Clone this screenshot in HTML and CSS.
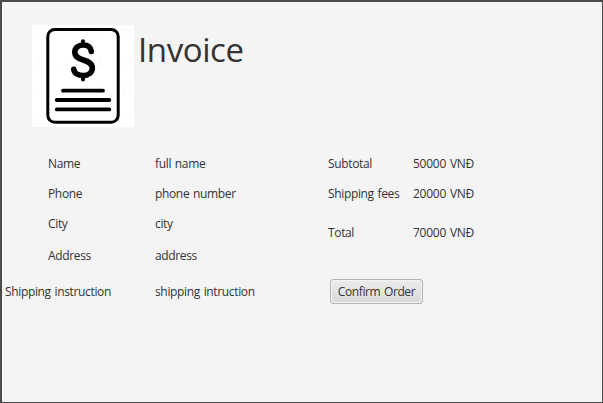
FILE: index.html
```html
<!DOCTYPE html>
<html lang="en">
<head>
<meta charset="utf-8">
<title>Invoice</title>
<link rel="stylesheet" href="styles.css">
</head>
<body>
<main class="window">
  <header class="header">
    <svg class="logo" width="102" height="102" viewBox="0 0 102 102" fill="none" stroke="#000" stroke-linecap="round" stroke-linejoin="round">
      <g stroke="#f7f7f7" stroke-width="1">
        <path d="M3 12l8-8M31 12l8-8M62 12l8-8M31 42l8-8M62 70l8-8M90 40l8-8M3 70l8-8M90 97l8-8"/>
        <circle cx="37" cy="8" r="3.5"/><circle cx="95" cy="8" r="3.5"/><circle cx="8" cy="37" r="3.5"/><circle cx="66" cy="37" r="3.5"/><circle cx="95" cy="66" r="3.5"/><circle cx="8" cy="95" r="3.5"/>
      </g>
      <rect x="15.8" y="4.5" width="70.4" height="92.8" rx="7" stroke-width="3"/>
      <path stroke-width="5.6" d="M59.300 26.500C59 22.500 56 20 51.300 20C46.500 20 42.800 22.800 42.800 27.300C42.800 37 60.300 33 60.300 43C60.300 47.500 56.500 50.500 51.300 50.500C46 50.500 42.300 48.200 41.800 44.300"/>
      <path stroke-width="4" d="M51 16.200V19M51 51.500V54.500"/>
      <path stroke-width="3.800" d="M31 65.700H71M24.700 75H77.300M24.700 84.400H77.300"/>
    </svg>
    <h1 class="title">Invoice</h1>
  </header>
  <div class="content">
    <dl class="customer">
      <dt>Name</dt><dd>full name</dd>
      <dt>Phone</dt><dd>phone number</dd>
      <dt>City</dt><dd>city</dd>
      <dt>Address</dt><dd>address</dd>
      <dt class="wide">Shipping instruction</dt><dd>shipping intruction</dd>
    </dl>
    <section class="summary">
      <dl class="totals">
        <dt>Subtotal</dt><dd>50000 VNĐ</dd>
        <dt>Shipping fees</dt><dd>20000 VNĐ</dd>
        <dt>Total</dt><dd>70000 VNĐ</dd>
      </dl>
      <button class="confirm" type="button">Confirm Order</button>
    </section>
  </div>
</main>
</body>
</html>
```
FILE: styles.css
```css
* { box-sizing: border-box; }
body {
  margin: 0;
  font: 12px/18px "Open Sans", "Noto Sans", sans-serif;
  letter-spacing: -0.35px;
  word-spacing: 1px;
  color: #333;
}
.window {
  width: 603px;
  height: 403px;
  overflow: hidden;
  background: #f4f4f4;
  border: solid #4b4b4b;
  border-width: 2px 1px 1px 2px;
}
.header {
  display: flex;
  gap: 4px;
  padding: 23px 0 0 30px;
}
.logo { background: #fff; }
.title {
  margin: 0;
  font-size: 33px;
  line-height: 50px;
  font-weight: 400;
  letter-spacing: -0.4px;
}
.content {
  display: flex;
  align-items: flex-start;
  padding: 22px 0 0 3px;
}
dl, dd { margin: 0; }
dt, dd { white-space: nowrap; }
.customer {
  display: grid;
  grid-template-columns: 150px 173px;
  grid-template-rows: 30px 30px 30px 34px 38px;
  align-items: center;
}
.customer dt { padding-left: 43px; }
.customer .wide { padding-left: 0; }
.totals {
  display: grid;
  grid-template-columns: 85px auto;
  grid-template-rows: 30px 30px 48px;
  align-items: center;
}
.totals dd { letter-spacing: -0.25px; }
.confirm {
  display: block;
  width: 93px;
  height: 25px;
  margin: 22px 0 0 2px;
  padding: 0;
  font: inherit;
  letter-spacing: -0.4px;
  word-spacing: inherit;
  color: inherit;
  white-space: nowrap;
  background: linear-gradient(#ececec, #d9d9d9);
  border: 1px solid #b3b3b3;
  border-radius: 3px;
  box-shadow: inset 0 0 0 1px #f3f3f3;
}
```
